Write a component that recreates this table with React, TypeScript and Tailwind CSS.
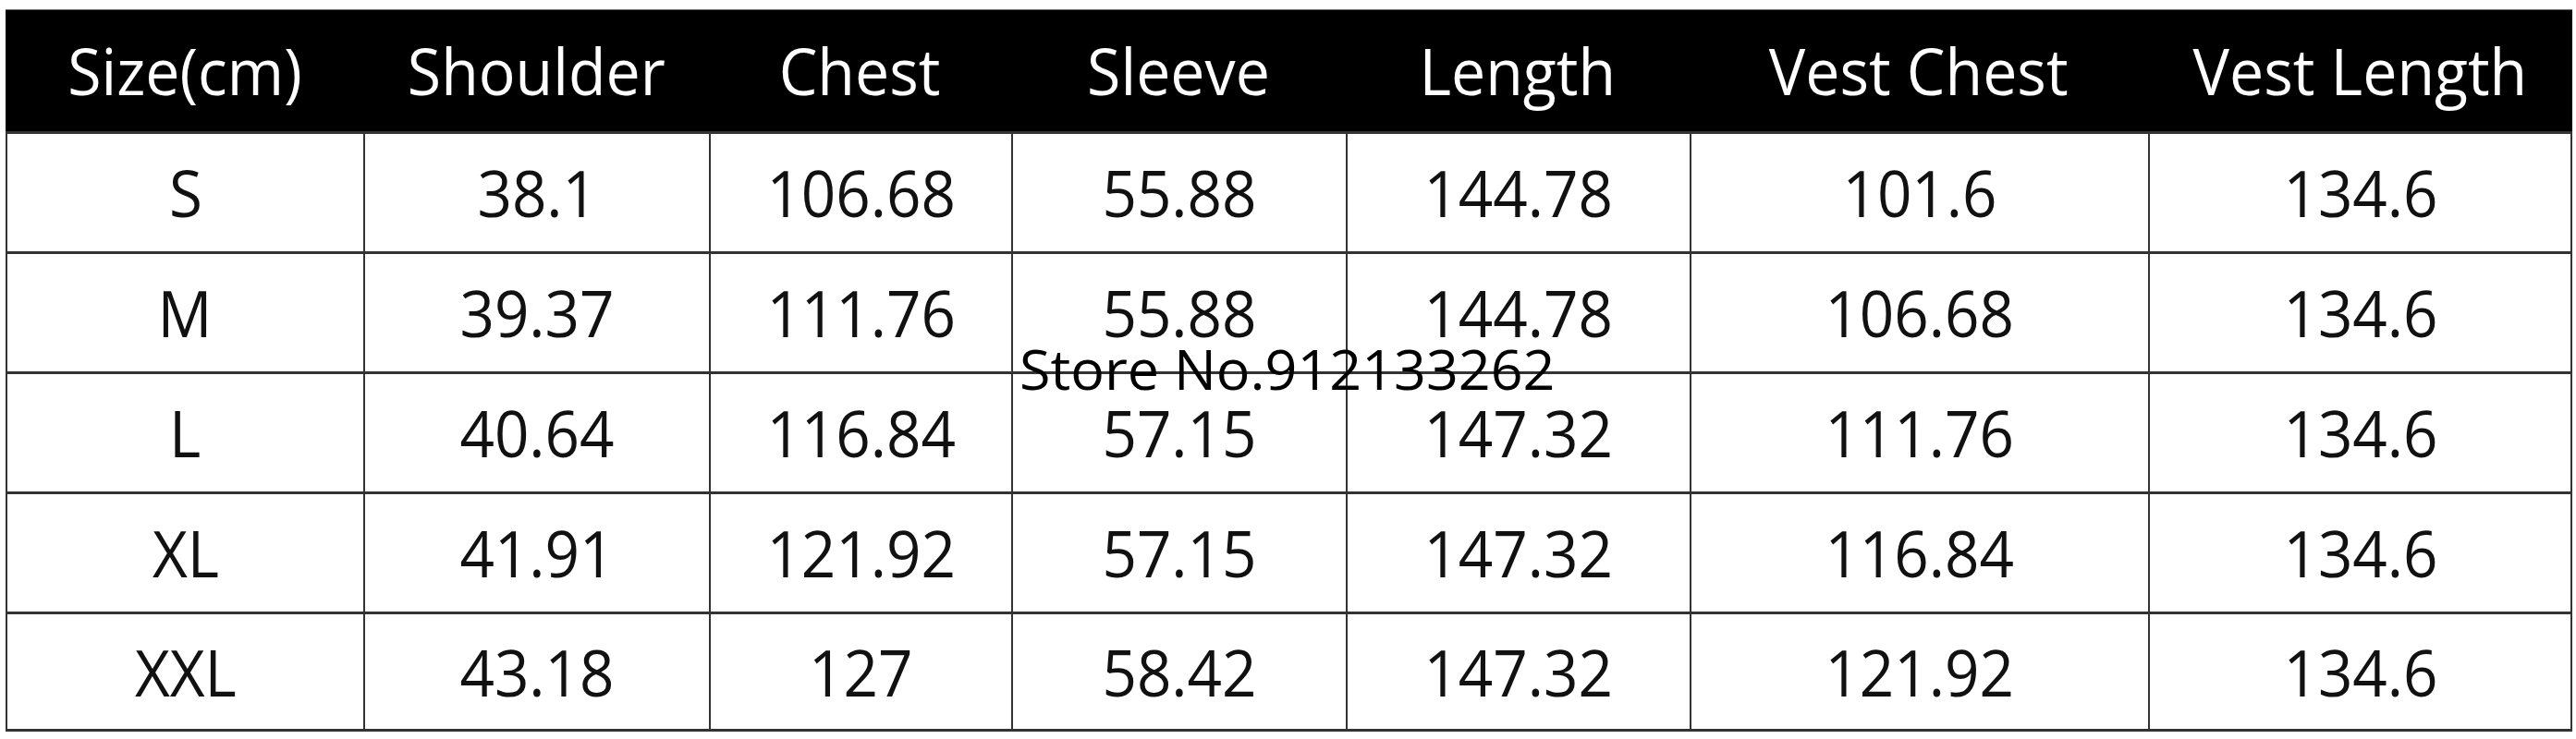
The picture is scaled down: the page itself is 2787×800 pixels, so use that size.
const headers = ['Size(cm)', 'Shoulder', 'Chest', 'Sleeve', 'Length', 'Vest Chest', 'Vest Length']

const rows = [
  ['S', '38.1', '106.68', '55.88', '144.78', '101.6', '134.6'],
  ['M', '39.37', '111.76', '55.88', '144.78', '106.68', '134.6'],
  ['L', '40.64', '116.84', '57.15', '147.32', '111.76', '134.6'],
  ['XL', '41.91', '121.92', '57.15', '147.32', '116.84', '134.6'],
  ['XXL', '43.18', '127', '58.42', '147.32', '121.92', '134.6'],
]

const cols = 'grid grid-cols-[387px_374px_327px_362px_372px_496px_459px]'

export default function App() {
  return (
    <div className="relative w-[2787px] h-[800px] bg-white overflow-hidden font-['Open_Sans',sans-serif] pt-[10px] pl-[6px]">
      <div className="w-[2777px] border-t border-[#6a6a6a]">
        <div className={`${cols} h-[131px] bg-black`}>
          {headers.map((h) => (
            <div key={h} className="flex items-center justify-center text-[69px] leading-none text-white">
              <span className="inline-block scale-x-[0.96] whitespace-nowrap">{h}</span>
            </div>
          ))}
        </div>
        {rows.map((r, i) => (
          <div key={i} className={`${cols} h-[130px] border-t-[3px] border-[#333] ${i === rows.length - 1 ? 'border-b-[3px]' : ''}`}>
            {r.map((v, j) => (
              <div
                key={j}
                className={`flex items-center justify-center text-[69px] leading-none text-[#111] border-l-2 border-[#333] ${j === r.length - 1 ? 'border-r-2' : ''}`}
              >
                <span className="inline-block scale-x-[0.95] whitespace-nowrap">{v}</span>
              </div>
            ))}
          </div>
        ))}
      </div>
      <div className="absolute left-[1103px] top-[368px] text-[61px] leading-none text-black whitespace-nowrap">
        Store No.912133262
      </div>
    </div>
  )
}
